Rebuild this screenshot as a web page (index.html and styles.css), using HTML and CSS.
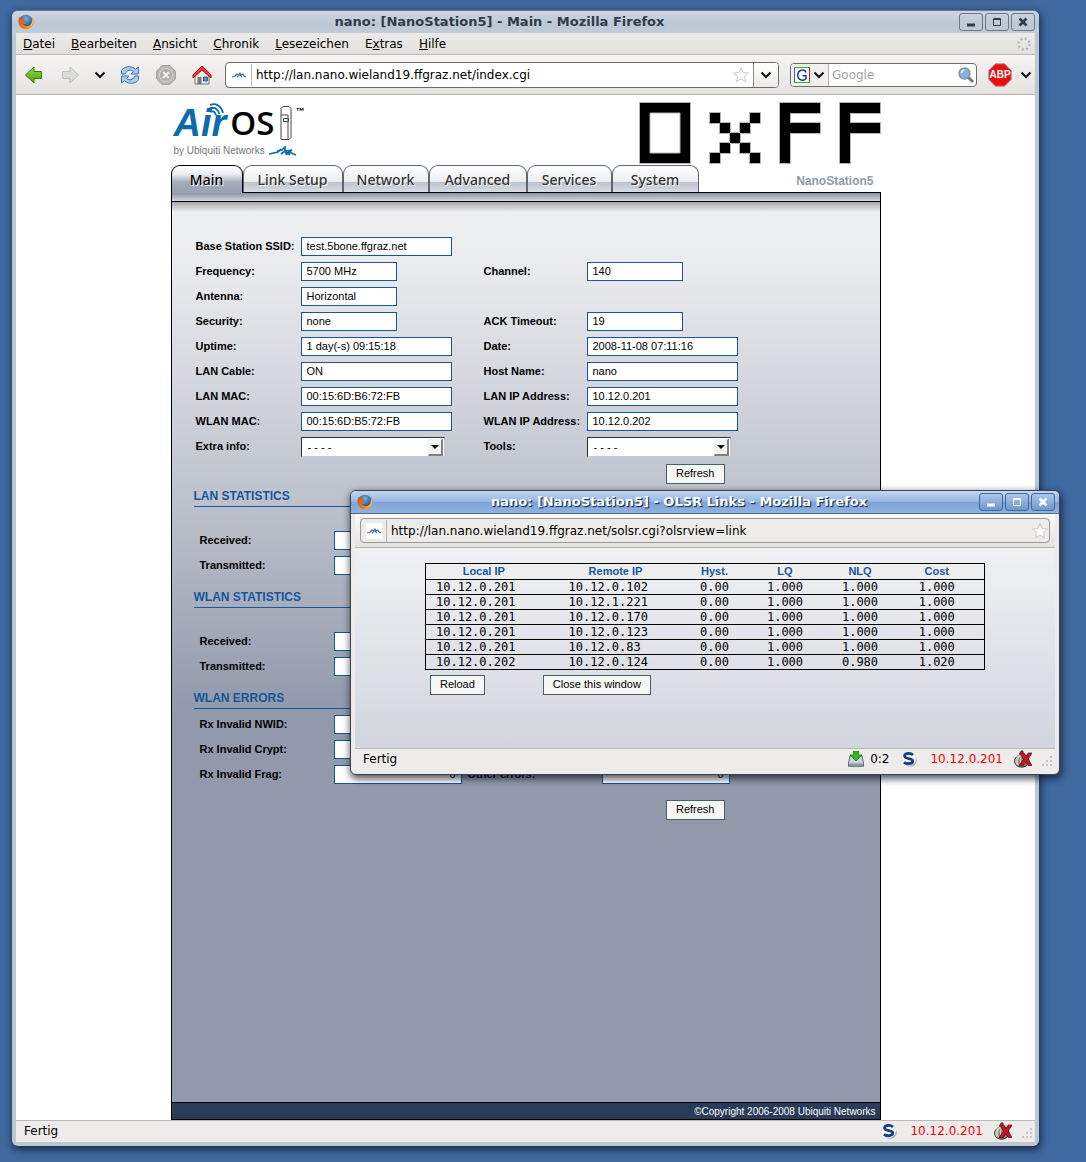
FILE: index.html
```html
<!DOCTYPE html>
<html lang="de">
<head>
<meta charset="utf-8">
<title>nano: [NanoStation5] - Main - Mozilla Firefox</title>
<link rel="stylesheet" href="styles.css">
</head>
<body class="desktop">

<svg class="sprites" width="0" height="0" aria-hidden="true">
  <defs>
    <radialGradient id="globe" cx=".5" cy=".3" r=".7"><stop offset="0" stop-color="#6fb4e8"/><stop offset="1" stop-color="#123a7a"/></radialGradient>
    <linearGradient id="fox" x1="0" y1="0" x2="1" y2="1"><stop offset="0" stop-color="#c9501a"/><stop offset=".6" stop-color="#ee7a1c"/><stop offset="1" stop-color="#fcc53a"/></linearGradient>
    <linearGradient id="green" x1="0" y1="0" x2="0" y2="1"><stop offset="0" stop-color="#8fd445"/><stop offset="1" stop-color="#4ea60c"/></linearGradient>
    <symbol id="firefox" viewBox="0 0 16 16">
      <circle cx="8" cy="7.500" r="6.800" fill="url(#globe)"/>
      <path d="M1.500 3C0 6-.2 10 2.500 13c3 3.200 8.500 3 11.200-.3C16 10 16.200 6 14 3c.4 2 .2 3.500-.3 4.500-.2 3-2.500 4.800-5 4.600C6.500 12 5 10.800 5 9.600c1 .6 2.400.6 3.500-.4C7 9 6 8.300 6.200 7.200l1.600-.9C7 5.500 5.500 5.500 4.500 4.800 4 4 3.800 3 4 2 3 2.500 2.700 3 2.300 3.600z" fill="url(#fox)"/>
      <path d="M14 3c1 3 .8 7-2.500 9.300C14 12 16.500 8 14 3z" fill="#fde05a"/>
    </symbol>
    <symbol id="splash" viewBox="0 0 16 16">
      <rect width="16" height="16" fill="#fff"/>
      <path d="M1 10l4-1M4 9l2-2 2 1 1-2 1 2 2-1 1 2 2 1M6 10l2-2M9 8l2 2" fill="none" stroke="#4a69a8" stroke-width="1.200"/>
    </symbol>
    <symbol id="chevron" viewBox="0 0 12 8"><path d="M1.500 1.500L6 6l4.500-4.500" fill="none" stroke="#111" stroke-width="2"/></symbol>
    <symbol id="star" viewBox="0 0 16 16"><path d="M8 .8l2.200 4.700 5.200.6-3.900 3.500 1.100 5.200L8 12.200l-4.600 2.600 1.100-5.200L.6 6.100l5.200-.6z" fill="#fafafa" stroke="#c9c9c9" stroke-linejoin="round"/></symbol>
    <symbol id="scribe" viewBox="0 0 16 16">
      <circle cx="9" cy="9" r="6.800" fill="#aaa"/><circle cx="7.700" cy="7.700" r="7.200" fill="#fafafa" stroke="#ddd" stroke-width=".6"/>
      <path d="M12 4C9.500 1.700 3.600 2 3.600 4.900c0 3.500 8.200 1.800 8.200 5.200 0 3.200-6.400 3.400-8.800 1.100" fill="none" stroke="#123f86" stroke-width="2.800"/>
    </symbol>
    <symbol id="onion" viewBox="0 0 18 18">
      <path d="M7 1c0 2-.8 3-2.500 4.500C1.500 7.700 0 9.500.8 12.500 2 16.500 6 17.500 9 17s6-2.500 6-6-2.500-5-5-6.500C9 3.500 8.500 2.500 9 1z" fill="#8d8676" stroke="#222"/>
      <path d="M7.500 4C4 7 2 11 4.500 15.500M8 4C6 8 5.500 12 8 16M6 5C1.500 8 .8 11 3 14.500" fill="none" stroke="#d8d2c0" stroke-width="1.200"/>
      <path d="M5.500 3H10l2 3.200L14.200 3H18l-3.800 6L18 15.500h-4l-2.200-3.500-2.500 3.500H5l4.600-6.300z" fill="#c41429" stroke="#5c0612" stroke-width=".7"/>
    </symbol>
    <symbol id="grip" viewBox="0 0 12 12"><path d="M10 0h2v2h-2zM10 4h2v2h-2zM6 4h2v2H6zM10 8h2v2h-2zM6 8h2v2H6zM2 8h2v2H2z" fill="#c4c3c0"/></symbol>
    <symbol id="win-min" viewBox="0 0 10 10"><path d="M1 8h8" stroke="currentColor" stroke-width="3"/></symbol>
    <symbol id="win-max" viewBox="0 0 10 10"><path d="M1.500 1.500h7v7h-7zM1 2.500h8" fill="none" stroke="currentColor"/></symbol>
    <symbol id="win-close" viewBox="0 0 10 10"><path d="M1.500 1.500l7 7M8.500 1.500l-7 7" stroke="currentColor" stroke-width="2.600"/></symbol>
  </defs>
</svg>

<main class="window window-main">
  <header class="titlebar">
    <svg class="icon16"><use href="#firefox"/></svg>
    <h1 class="window-title">nano: [NanoStation5] - Main - Mozilla Firefox</h1>
    <div class="window-buttons">
      <button type="button" class="window-button"><svg class="icon10"><use href="#win-min"/></svg></button>
      <button type="button" class="window-button"><svg class="icon10"><use href="#win-max"/></svg></button>
      <button type="button" class="window-button"><svg class="icon10"><use href="#win-close"/></svg></button>
    </div>
  </header>

  <div class="client">
    <nav class="menubar">
      <a href="#"><u>D</u>atei</a><a href="#"><u>B</u>earbeiten</a><a href="#"><u>A</u>nsicht</a><a href="#"><u>C</u>hronik</a><a href="#"><u>L</u>esezeichen</a><a href="#">E<u>x</u>tras</a><a href="#"><u>H</u>ilfe</a>
      <svg class="throbber" viewBox="0 0 14 14"><circle cx="7" cy="7" r="5.500" fill="none" stroke="#b9b8b6" stroke-width="2.600" stroke-dasharray="2 2.320"/></svg>
    </nav>

    <div class="toolbar">
      <button type="button" class="tool"><svg class="icon20" viewBox="0 0 20 20"><path d="M1.500 10L10 2v4.500h7.500v7H10V18z" fill="url(#green)" stroke="#3a7a0c" stroke-linejoin="round"/></svg></button>
      <button type="button" class="tool tool-forward"><svg class="icon20" viewBox="0 0 20 20"><path d="M18.500 10L10 2v4.500H2.500v7H10V18z" fill="#dcdcda" stroke="#bdbdbb" stroke-linejoin="round"/></svg></button>
      <button type="button" class="tool tool-history"><svg class="chevron"><use href="#chevron"/></svg></button>
      <button type="button" class="tool"><svg class="icon20" viewBox="0 0 20 20"><g fill="#a9cbee" stroke="#3f70b4" stroke-linejoin="round"><path d="M1.500 9V5.500C3 2.500 8 .5 13 2.500l2.500 1.800L18.500 2v7H11l2.500-2.500C11 4.500 7 4.500 5 9z"/><path d="M18.500 11v3.500c-1.500 3-6.500 5-11.500 3l-2.500-1.800L1.500 18v-7H9l-2.500 2.500C9 15.500 13 15.500 15 11z"/></g></svg></button>
      <button type="button" class="tool"><svg class="icon20" viewBox="0 0 20 20"><path d="M6 .7h8L19.300 6v8L14 19.300H6L.7 14V6z" fill="#bdb8b8" stroke="#a09c9c"/><circle cx="10" cy="10" r="6.500" fill="#b3aeae" stroke="#d6d3d3"/><path d="M7 7l6 6M13 7l-6 6" stroke="#f0eeee" stroke-width="2"/></svg></button>
      <button type="button" class="tool"><svg class="icon20" viewBox="0 0 20 20"><path d="M3 10v9h14v-9l-7-7z" fill="#ececea" stroke="#777"/><path d="M5.500 12h4v7h-4z" fill="#777"/><path d="M11.500 12h4v4h-4z" fill="#5a8ccc" stroke="#3a5f94"/><path d="M1 9.800L10 1l9 8.800v3.200L10 5 1 13z" fill="#ee3a3a" stroke="#b00e0e" stroke-linejoin="round"/></svg></button>
      <div class="location">
        <svg class="icon16"><use href="#splash"/></svg>
        <input class="location-input" type="text" aria-label="URL" value="http://lan.nano.wieland19.ffgraz.net/index.cgi">
        <svg class="icon16"><use href="#star"/></svg>
        <button type="button" class="location-drop"><svg class="chevron"><use href="#chevron"/></svg></button>
      </div>
      <div class="search">
        <div class="engine">
          <svg class="icon16" viewBox="0 0 16 16"><path fill="#fff" d="M0 0h16v16H0z"/><path d="M0 .5h16" stroke="#38b020"/><path d="M0 15.500h16" stroke="#38b020"/><path d="M.5 1v14" stroke="#2a5cc8"/><path d="M15.500 1v14" stroke="#c01818"/><path d="M12 5.500C11 2 4 2 3.800 8c0 6 6.500 6 8.200 3.500V8.800H8.500" fill="none" stroke="#1a3aa0" stroke-width="1.500"/></svg>
          <svg class="chevron"><use href="#chevron"/></svg>
        </div>
        <input class="search-input" type="text" placeholder="Google" aria-label="Google">
        <svg class="icon16" viewBox="0 0 16 16"><path d="M10 10l5 5" stroke="#777" stroke-width="3"/><circle cx="6.500" cy="6.500" r="5.500" fill="#82b1e4" stroke="#8a8f96" stroke-width="1.400"/><path d="M3.500 6a3 3 0 0 1 3-3" stroke="#e6f1fc" stroke-width="1.500" fill="none"/></svg>
      </div>
      <button type="button" class="abp"><svg class="abp-sign" viewBox="0 0 24 24"><path d="M7.500.8h9L23.200 7.500v9l-6.700 6.700h-9L.8 16.500v-9z" fill="#ee0c0c" stroke="#9a9a9a"/></svg><span>ABP</span></button>
      <button type="button" class="tool tool-history"><svg class="chevron"><use href="#chevron"/></svg></button>
    </div>

    <div class="webpage">
      <div class="site">
        <header class="site-header">
          <div class="airos">
            <div class="airos-name"><span class="air">Air</span><span class="os">OS</span>
              <svg class="device" viewBox="0 0 12 34"><path d="M1 2.500L3 .5h6l2 2v29l-2 2H1zM1 9h7v24M3.500 12.500h5v3h-5z" fill="none" stroke="#444"/></svg>
              <span class="tm">™</span>
            </div>
            <svg class="waves" viewBox="0 0 16 14"><g fill="none" stroke="#0a6cad" stroke-width="1.800"><path d="M2 9c3-1.500 5-.5 6 3"/><path d="M1.500 5.500C6 3.500 10 5.500 11.500 11"/><path d="M2 2C8-.5 13.500 3 15 10"/></g></svg>
            <div class="tagline"><span>by Ubiquiti Networks</span>
              <svg class="splash-logo" viewBox="0 0 28 10"><path d="M0 8l9-2 3-3M8 5l5-1 3-3v4l7-1-3 2 7 3M12 8l4-3 2 4M16 5l5 4" fill="none" stroke="#0a6cad" stroke-width="1.700"/></svg>
            </div>
          </div>
          <svg class="community-logo" viewBox="0 0 242 62" role="img" aria-label="0xFF">
            <path stroke="#b4b4b4" stroke-width="2" paint-order="stroke" d="M1 1h50v60H1zM71 11h10v10H71zM111 11h10v10h-10zM81 21h10v10H81zM101 21h10v10h-10zM91 31h10v10H91zM81 41h10v10H81zM101 41h10v10h-10zM71 51h10v10H71zM111 51h10v10h-10zM141 1h40v10h-30v10h30v10h-30v30h-10zM201 1h40v10h-30v10h30v10h-30v30h-10z"/>
            <path d="M11 11h30v40H11z" fill="#fff" stroke="#b4b4b4"/>
          </svg>
        </header>

        <div class="tabrow">
          <nav class="tabs">
            <a class="tab tab-active" href="#">Main</a>
            <a class="tab" href="#">Link Setup</a>
            <a class="tab" href="#">Network</a>
            <a class="tab" href="#">Advanced</a>
            <a class="tab" href="#">Services</a>
            <a class="tab" href="#">System</a>
          </nav>
          <span class="model">NanoStation5</span>
        </div>

        <form class="panel">
          <div class="strip"></div>
          <div class="panel-body">
            <div class="info">
              <label for="ssid">Base Station SSID:</label><input class="field wide" id="ssid" readonly value="test.5bone.ffgraz.net"><span></span><span></span>
              <label for="freq">Frequency:</label><input class="field" id="freq" readonly value="5700 MHz"><label for="chan">Channel:</label><input class="field" id="chan" readonly value="140">
              <label for="ant">Antenna:</label><input class="field" id="ant" readonly value="Horizontal"><span></span><span></span>
              <label for="sec">Security:</label><input class="field" id="sec" readonly value="none"><label for="ack">ACK Timeout:</label><input class="field" id="ack" readonly value="19">
              <label for="up">Uptime:</label><input class="field wide" id="up" readonly value="1 day(-s) 09:15:18"><label for="date">Date:</label><input class="field wide" id="date" readonly value="2008-11-08 07:11:16">
              <label for="cable">LAN Cable:</label><input class="field wide" id="cable" readonly value="ON"><label for="host">Host Name:</label><input class="field wide" id="host" readonly value="nano">
              <label for="lmac">LAN MAC:</label><input class="field wide" id="lmac" readonly value="00:15:6D:B6:72:FB"><label for="lip">LAN IP Address:</label><input class="field wide" id="lip" readonly value="10.12.0.201">
              <label for="wmac">WLAN MAC:</label><input class="field wide" id="wmac" readonly value="00:15:6D:B5:72:FB"><label for="wip">WLAN IP Address:</label><input class="field wide" id="wip" readonly value="10.12.0.202">
              <label for="extra">Extra info:</label><span class="picker"><select id="extra"><option>- - - -</option></select><span class="picker-arrow"></span></span>
              <label for="tools">Tools:</label><span class="picker"><select id="tools"><option>- - - -</option></select><span class="picker-arrow"></span></span>
            </div>
            <div class="actions"><button type="button" class="push">Refresh</button></div>

            <h2 class="section">LAN STATISTICS</h2>
            <div class="stats stats-spaced">
              <label for="lrx">Received:</label><input class="field" id="lrx" readonly>
              <label for="ltx">Transmitted:</label><input class="field" id="ltx" readonly>
            </div>
            <h2 class="section">WLAN STATISTICS</h2>
            <div class="stats stats-spaced">
              <label for="wrx">Received:</label><input class="field" id="wrx" readonly>
              <label for="wtx">Transmitted:</label><input class="field" id="wtx" readonly>
            </div>
            <h2 class="section">WLAN ERRORS</h2>
            <div class="stats">
              <label for="nwid">Rx Invalid NWID:</label><input class="field" id="nwid" readonly>
              <label for="crypt">Rx Invalid Crypt:</label><input class="field" id="crypt" readonly>
              <label for="frag">Rx Invalid Frag:</label><input class="field" id="frag" readonly value="0">
              <label class="second" for="other">Other errors:</label><input class="field" id="other" readonly value="0">
            </div>
            <div class="actions actions-last"><button type="button" class="push">Refresh</button></div>
          </div>
          <footer class="copyright">©Copyright 2006-2008 Ubiquiti Networks</footer>
        </form>
      </div>
    </div>

    <footer class="statusbar">
      <span class="status-text">Fertig</span>
      <svg class="icon16"><use href="#scribe"/></svg>
      <span class="status-ip">10.12.0.201</span>
      <svg class="icon18"><use href="#onion"/></svg>
      <svg class="grip"><use href="#grip"/></svg>
    </footer>
  </div>
</main>

<section class="window window-popup">
  <header class="titlebar">
    <svg class="icon16"><use href="#firefox"/></svg>
    <h1 class="window-title">nano: [NanoStation5] - OLSR Links - Mozilla Firefox</h1>
    <div class="window-buttons">
      <button type="button" class="window-button"><svg class="icon10"><use href="#win-min"/></svg></button>
      <button type="button" class="window-button"><svg class="icon10"><use href="#win-max"/></svg></button>
      <button type="button" class="window-button"><svg class="icon10"><use href="#win-close"/></svg></button>
    </div>
  </header>
  <div class="client">
    <div class="toolbar">
      <div class="location">
        <svg class="icon16"><use href="#splash"/></svg>
        <input class="location-input" type="text" aria-label="URL" readonly value="http://lan.nano.wieland19.ffgraz.net/solsr.cgi?olsrview=link">
        <svg class="icon16"><use href="#star"/></svg>
      </div>
    </div>
    <div class="popup-body">
      <table class="links">
        <colgroup><col class="c-local"><col class="c-remote"><col class="c-hyst"><col class="c-lq"><col class="c-nlq"><col></colgroup>
        <thead><tr><th>Local IP</th><th>Remote IP</th><th>Hyst.</th><th>LQ</th><th>NLQ</th><th>Cost</th></tr></thead>
        <tbody>
          <tr><td>10.12.0.201</td><td>10.12.0.102</td><td>0.00</td><td>1.000</td><td>1.000</td><td>1.000</td></tr>
          <tr><td>10.12.0.201</td><td>10.12.1.221</td><td>0.00</td><td>1.000</td><td>1.000</td><td>1.000</td></tr>
          <tr><td>10.12.0.201</td><td>10.12.0.170</td><td>0.00</td><td>1.000</td><td>1.000</td><td>1.000</td></tr>
          <tr><td>10.12.0.201</td><td>10.12.0.123</td><td>0.00</td><td>1.000</td><td>1.000</td><td>1.000</td></tr>
          <tr><td>10.12.0.201</td><td>10.12.0.83</td><td>0.00</td><td>1.000</td><td>1.000</td><td>1.000</td></tr>
          <tr><td>10.12.0.202</td><td>10.12.0.124</td><td>0.00</td><td>1.000</td><td>0.980</td><td>1.020</td></tr>
        </tbody>
      </table>
      <div class="popup-actions"><button type="button" class="push">Reload</button><button type="button" class="push">Close this window</button></div>
    </div>
    <footer class="statusbar">
      <span class="status-text">Fertig</span>
      <svg class="icon16" viewBox="0 0 16 16"><path d="M2 5h12l1.500 7v3.500H.5V12z" fill="#c9d3e0" stroke="#66707c"/><path d="M1 12.500h14v3H1z" fill="#8d98a6"/><path d="M5.500 0h5v4h3.500L8 10 2 4h3.500z" fill="#34b51e" stroke="#168008" stroke-width=".8"/></svg>
      <span class="status-count">0:2</span>
      <svg class="icon16"><use href="#scribe"/></svg>
      <span class="status-ip">10.12.0.201</span>
      <svg class="icon18"><use href="#onion"/></svg>
      <svg class="grip"><use href="#grip"/></svg>
    </footer>
  </div>
</section>
</body>
</html>
```

FILE: styles.css
```css
*, *::before, *::after { box-sizing: border-box; }

body, h1, h2 { margin: 0; }
button, input, select { font: inherit; color: inherit; margin: 0; padding: 0; border: 0; border-radius: 0; background: none; }
svg { display: block; flex: none; }
a { color: inherit; text-decoration: none; }

.desktop {
  position: relative;
  display: flex;
  flex-direction: column;
  min-height: 100vh;
  padding: 10px 47px 16px 12px;
  background: #3f699f;
  font: 12px/16px "DejaVu Sans", sans-serif;
  color: #000;
}
.sprites { position: absolute; }
.icon10 { width: 10px; height: 10px; }
.icon16 { width: 16px; height: 16px; }
.icon18 { width: 18px; height: 18px; }
.icon20 { width: 20px; height: 20px; }
.chevron { width: 12px; height: 8px; }

/* window frames */
.window { display: flex; flex-direction: column; border-radius: 6px; box-shadow: 1px 3px 7px 1px rgba(10, 20, 40, .7); }
.window-main { flex: 1; padding: 0 4px 4px; background: #bcc7d4; border-top: 1px solid #69788c; }
.window-popup {
  position: absolute;
  left: 350px;
  right: 26px;
  top: 490px;
  padding: 0 4px 2px;
  border: 1px solid #3d434c;
  background: #edecea;
}
.titlebar { display: flex; align-items: center; height: 22px; }
.window-main .titlebar { margin: 0 -4px; padding: 0 4px 0 6px; background: linear-gradient(#ccd6e2, #bdc8d6 60%, #c0cad8); border-radius: 6px 6px 0 0; }
.window-popup .titlebar { height: 23px; margin: 0 -4px; padding: 0 4px 0 6px; background: linear-gradient(#c3d7f2, #96b6e2 48%, #7fa3d6 52%, #8fb2e2); border-bottom: 1px solid #4a6c9e; border-radius: 5px 5px 0 0; }
.window-title { flex: 1; padding-left: 6px; font-size: 13px; line-height: 16px; text-align: center; color: #2e3c4c; }
.window-popup .window-title { color: #fff; text-shadow: 1px 1px 1px #1c3560, 1px 1px 0 #33517f; }
.window-buttons { display: flex; gap: 2px; }
.window-button { display: flex; align-items: center; justify-content: center; width: 24px; height: 18px; border: 1px solid #6a7889; border-radius: 3px; color: #2e3c4c; }
.window-popup .window-button { border-color: #41679d; color: #fff; background: linear-gradient(#aac6ec, #7096cc); }
.client { display: flex; flex: 1; flex-direction: column; }

/* browser chrome */
.menubar { display: flex; align-items: center; gap: 16px; height: 22px; padding: 0 4px 0 7px; background: linear-gradient(#eceae8, #e3e1de); border-bottom: 1px solid #bab8b5; }
.throbber { width: 14px; height: 14px; margin-left: auto; }
.toolbar { display: flex; align-items: center; height: 40px; padding: 0 3px 0 8px; background: linear-gradient(#f6f5f4, #e4e3e0); border-bottom: 1px solid #b5b3b0; }
.tool { margin-right: 16px; }
.tool-forward { margin-right: 14px; }
.tool-history { margin-right: 14px; }
.toolbar > .tool-history:last-child { margin-right: 0; }
.location { display: flex; flex: 1; align-items: center; height: 26px; margin: 0 11px 0 -3px; padding-left: 5px; border: 1px solid #6e6c69; border-radius: 4px; background: #fff; }
.location-input { flex: 1; min-width: 0; height: 22px; margin-left: 4px; padding-left: 4px; border-left: 1px solid #b4b2af; outline: 0; }
.location-drop { display: flex; align-items: center; justify-content: center; width: 25px; height: 24px; margin-left: 4px; border-left: 1px solid #8c8a87; border-radius: 0 3px 3px 0; background: linear-gradient(#fff, #eceae8); }
.search { display: flex; align-items: center; width: 187px; height: 24px; padding-right: 2px; border: 1px solid #6e6c69; border-radius: 4px; background: #fff; }
.engine { display: flex; align-items: center; gap: 3px; height: 22px; padding: 0 3px; border-right: 1px solid #b4b2af; background: #f1f0ee; border-radius: 3px 0 0 3px; }
.search-input { flex: 1; min-width: 0; padding-left: 3px; outline: 0; }
.search-input::placeholder { color: #a5a3a0; opacity: 1; }
.abp { position: relative; width: 24px; height: 24px; margin: 0 8px 0 11px; color: #fff; font: bold 10px/24px "Liberation Sans", sans-serif; text-align: center; }
.abp-sign { position: absolute; inset: 0; width: 24px; height: 24px; }
.abp span { position: relative; }
.window-popup .toolbar { height: 34px; padding: 0 5px; background: linear-gradient(#fbfafa, #e3e2df); }
.window-popup .location { margin: 0; height: 25px; padding-right: 1px; background: #edecea; border-color: #9a9895; }
.statusbar { display: flex; align-items: center; height: 22px; padding: 0 3px 2px 8px; background: #edecea; border-top: 1px solid #bab8b5; }
.window-popup .statusbar { height: 24px; padding-bottom: 3px; }
.status-text { flex: 1; }
.status-count { margin: 0 12px 0 6px; }
.status-ip { margin: 0 11px 0 13px; color: #f00; }
.grip { width: 12px; height: 12px; margin: 6px 0 0 8px; }

/* device web interface */
.webpage { display: flex; flex: 1; justify-content: center; background: #fff; font: 11px/16px "Liberation Sans", sans-serif; }
.site { display: flex; flex-direction: column; width: 100%; max-width: 710px; }
.site-header { display: flex; justify-content: space-between; height: 70px; padding: 7px 0 0 3px; }
.airos { position: relative; }
.airos-name { display: flex; align-items: center; height: 42px; font-size: 38px; line-height: 42px; }
.air { color: #0a6cad; font-style: italic; font-weight: bold; }
.os { margin-left: 4px; font: 600 33px/42px "Open Sans", sans-serif; }
.device { width: 12px; height: 34px; margin-left: 6px; }
.tm { align-self: flex-start; margin-left: 3px; font-size: 9px; line-height: 18px; font-weight: bold; }
.waves { position: absolute; left: 34px; top: 1px; width: 16px; height: 14px; }
.tagline { display: flex; align-items: center; gap: 4px; font-size: 10px; line-height: 13px; color: #777; }
.splash-logo { width: 28px; height: 10px; }
.community-logo { width: 242px; height: 62px; }
.tabrow { display: flex; justify-content: space-between; height: 27px; }
.tabs { display: grid; grid-template-columns: 72px 100px 86px 98px 85px 87px; }
.tab {
  border: 1px solid #5c6670;
  border-bottom: 0;
  border-radius: 9px 9px 0 0;
  background: linear-gradient(#fff, #eceef1 55%, #bcc3cd 58%, #dfe2e7);
  color: #333;
  font: 500 14px/28px "Noto Sans", sans-serif;
  text-align: center;
  text-shadow: 1px 1px 0 #fff;
}
.tab-active { position: relative; height: 28px; border-color: #000; background: linear-gradient(#fff, #eceef1 30%, #a4abb9 60%, #99a2b2); color: #000; }
.model { padding: 8px 7px 0 0; color: #9199aa; font-size: 12px; font-weight: bold; }
.panel { display: flex; flex: 1; flex-direction: column; border: 1px solid #000; }
.strip { height: 9px; background: linear-gradient(#8a94a7, #d3d8e0); border-bottom: 1px solid #000; }
.panel-body {
  flex: 1;
  padding: 32px 22px 0;
  background:
    linear-gradient(rgba(90, 90, 90, .5), rgba(90, 90, 90, 0)) top / 100% 10px no-repeat,
    linear-gradient(#f0f1f2, #e9eaed 70px, #c1c5cf 280px, #9199aa 510px);
}
.info { display: grid; grid-template-columns: 105px 183px 103px 1fr; grid-auto-rows: 25px; align-items: center; padding-left: 2px; }
.info label, .stats label { padding-bottom: 2px; font-weight: bold; white-space: nowrap; }
.field { width: 96px; height: 19px; padding: 0 5px 1px; border: 1px solid #15569c; background: #fff; outline: 0; }
.field.wide { width: 151px; }
.picker { position: relative; width: 144px; height: 20px; margin-top: 1px; }
.picker select { display: block; width: 100%; height: 100%; padding-left: 6px; appearance: none; border: 1px solid #c8cace; border-top-color: #2b333a; border-left-color: #2b333a; background: #fff; outline: 0; }
.picker-arrow { position: absolute; right: 2px; top: 2px; width: 15px; height: 17px; border: 1px solid #f4f4f2; border-right: 2px solid #808080; border-bottom: 2px solid #808080; background: #f4f4f2; pointer-events: none; }
.picker-arrow::after { content: ""; position: absolute; left: 2px; top: 5px; border: 4px solid transparent; border-top-color: #000; border-bottom: 0; }
.push { height: 20px; padding: 0 9px 2px; border: 1px solid #48606a; background: #f6f7f5; }
.actions { display: flex; justify-content: flex-end; margin: 5px 133px 0 0; }
.actions-last { margin-top: 13px; }
.section { width: 536px; height: 23px; margin-bottom: 3px; border-bottom: 1px solid #15569c; color: #15569c; font-size: 12px; line-height: 25px; }
.stats { display: grid; grid-template-columns: 134px 134px 134px 1fr; grid-auto-rows: 25px; align-items: center; padding-left: 6px; }
.stats label { grid-column: 1; }
.stats .second { grid-column: 3; }
.stats .field { width: 128px; text-align: right; }
.section + .stats-spaced { margin-top: 21px; padding-bottom: 7px; }
.copyright { height: 17px; border-top: 1px solid #000; padding-right: 4px; background: #293c57; color: #fff; font-size: 10px; line-height: 17px; text-align: right; }

/* OLSR links popup */
.popup-body { min-height: 200px; padding-top: 15px; background: linear-gradient(#f0f1f3, #d2d5de); font: 11px/16px "Liberation Sans", sans-serif; }
.links { width: 80%; margin: 0 auto; table-layout: fixed; border-collapse: collapse; border: 1px solid #000; }
.links th { height: 16px; padding: 0; background: #eee; color: #15569c; line-height: 15px; }
.links tr + tr, .links tbody tr { border-top: 1px solid #000; }
.links td { height: 15px; padding: 0; font: 12px/14px "DejaVu Sans Mono", monospace; text-align: center; }
.links td:nth-child(1) { padding-left: 10px; text-align: left; }
.links td:nth-child(2) { padding-left: 27px; text-align: left; }
.c-local { width: 116px; }
.c-remote { width: 148px; }
.c-hyst { width: 50px; }
.c-lq { width: 91px; }
.c-nlq { width: 59px; }
.popup-actions { display: flex; gap: 58px; padding: 5px 0 0 75px; }
```
